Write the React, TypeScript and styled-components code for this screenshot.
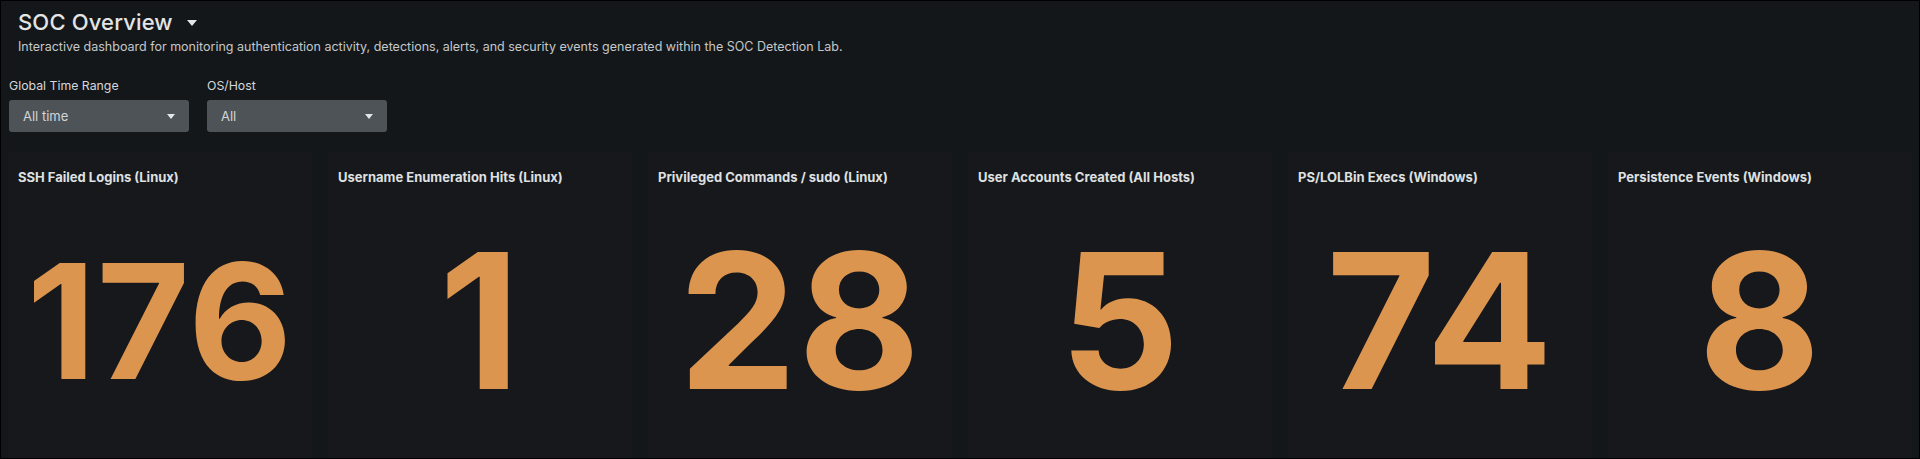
import React from 'react';
import styled, { createGlobalStyle } from 'styled-components';

const GlobalStyle = createGlobalStyle`
  html, body {
    margin: 0;
    padding: 0;
    background: #000;
  }
  * {
    box-sizing: border-box;
  }
`;

const StyledDashboard = styled.div`
  width: 1920px;
  height: 459px;
  border: 1px solid #000;
  background-color: #13171a;
  font-family: Inter, 'Liberation Sans', sans-serif;
  color: #e1e2e3;
  display: flex;
  flex-direction: column;
  overflow: hidden;
`;

const StyledHeader = styled.div`
  padding: 9px 17px 0;
`;

const StyledTitleRow = styled.div`
  display: flex;
  flex-direction: row;
  align-items: center;
  gap: 14px;
`;

const StyledTitle = styled.h1`
  margin: 0;
  font-size: 22px;
  line-height: 25px;
  font-weight: 500;
  letter-spacing: 0.15px;
  color: #e4e5e6;
`;

const StyledDescription = styled.div`
  margin-top: 3px;
  font-size: 12.5px;
  line-height: 18px;
  color: #c5c7c9;
`;

const StyledInputs = styled.div`
  display: flex;
  flex-direction: row;
  gap: 18px;
  padding: 22px 8px 0;
`;

const StyledInput = styled.div`
  display: flex;
  flex-direction: column;
  gap: 6px;
  width: 180px;
`;

const StyledLabel = styled.label`
  font-size: 12.3px;
  line-height: 16px;
  color: #d6d8da;
`;

const StyledSelect = styled.div`
  height: 32px;
  padding: 0 14px;
  display: flex;
  flex-direction: row;
  align-items: center;
  justify-content: space-between;
  background-color: #4e5358;
  border-radius: 3px;
  font-size: 13px;
  color: #d3d5d7;
`;

const StyledPanels = styled.div`
  flex: 1;
  display: grid;
  grid-template-columns: repeat(6, 1fr);
  gap: 16px;
  padding: 20px 7px 0;
`;

const StyledPanel = styled.div`
  display: flex;
  flex-direction: column;
  background-color: #17181b;
  padding: 17px 10px 0;
`;

const StyledPanelTitle = styled.div`
  font-size: 13px;
  line-height: 16px;
  font-weight: 700;
  color: #dfe0e1;
  white-space: nowrap;
`;

const StyledValue = styled.div<Props>`
  flex: 1;
  display: flex;
  align-items: center;
  justify-content: center;
  font-weight: 700;
  line-height: 1;
  color: #dc954f;
  letter-spacing: 1px;
  padding-bottom: 2px;

  font-size: ${props => props.size};
`;

interface Props {
  size?: string;
}

const Caret = ({ w, h, color }: { w: number; h: number; color: string }) => (
  <svg width={w} height={h} viewBox="0 0 10 6">
    <path d="M0 0 L10 0 L5 6 Z" fill={color} />
  </svg>
);

const panels = [
  { title: 'SSH Failed Logins (Linux)', value: '176' },
  { title: 'Username Enumeration Hits (Linux)', value: '1' },
  { title: 'Privileged Commands / sudo (Linux)', value: '28' },
  { title: 'User Accounts Created (All Hosts)', value: '5' },
  { title: 'PS/LOLBin Execs (Windows)', value: '74' },
  { title: 'Persistence Events (Windows)', value: '8' },
];

// single values shrink once they no longer fit the panel width
const valueSize = (value: string) => (value.length > 2 ? '160px' : '188px');

export default function App() {
  return (
    <>
      <GlobalStyle />
      <StyledDashboard>
        <StyledHeader>
          <StyledTitleRow>
            <StyledTitle>SOC Overview</StyledTitle>
            <Caret w={10} h={6} color="#e4e5e6" />
          </StyledTitleRow>
          <StyledDescription>
            Interactive dashboard for monitoring authentication activity, detections, alerts, and
            security events generated within the SOC Detection Lab.
          </StyledDescription>
        </StyledHeader>
        <StyledInputs>
          <StyledInput>
            <StyledLabel>Global Time Range</StyledLabel>
            <StyledSelect>
              All time
              <Caret w={8} h={5} color="#e4e5e6" />
            </StyledSelect>
          </StyledInput>
          <StyledInput>
            <StyledLabel>OS/Host</StyledLabel>
            <StyledSelect>
              All
              <Caret w={8} h={5} color="#e4e5e6" />
            </StyledSelect>
          </StyledInput>
        </StyledInputs>
        <StyledPanels>
          {panels.map(p => (
            <StyledPanel key={p.title}>
              <StyledPanelTitle>{p.title}</StyledPanelTitle>
              <StyledValue size={valueSize(p.value)}>{p.value}</StyledValue>
            </StyledPanel>
          ))}
        </StyledPanels>
      </StyledDashboard>
    </>
  );
}
